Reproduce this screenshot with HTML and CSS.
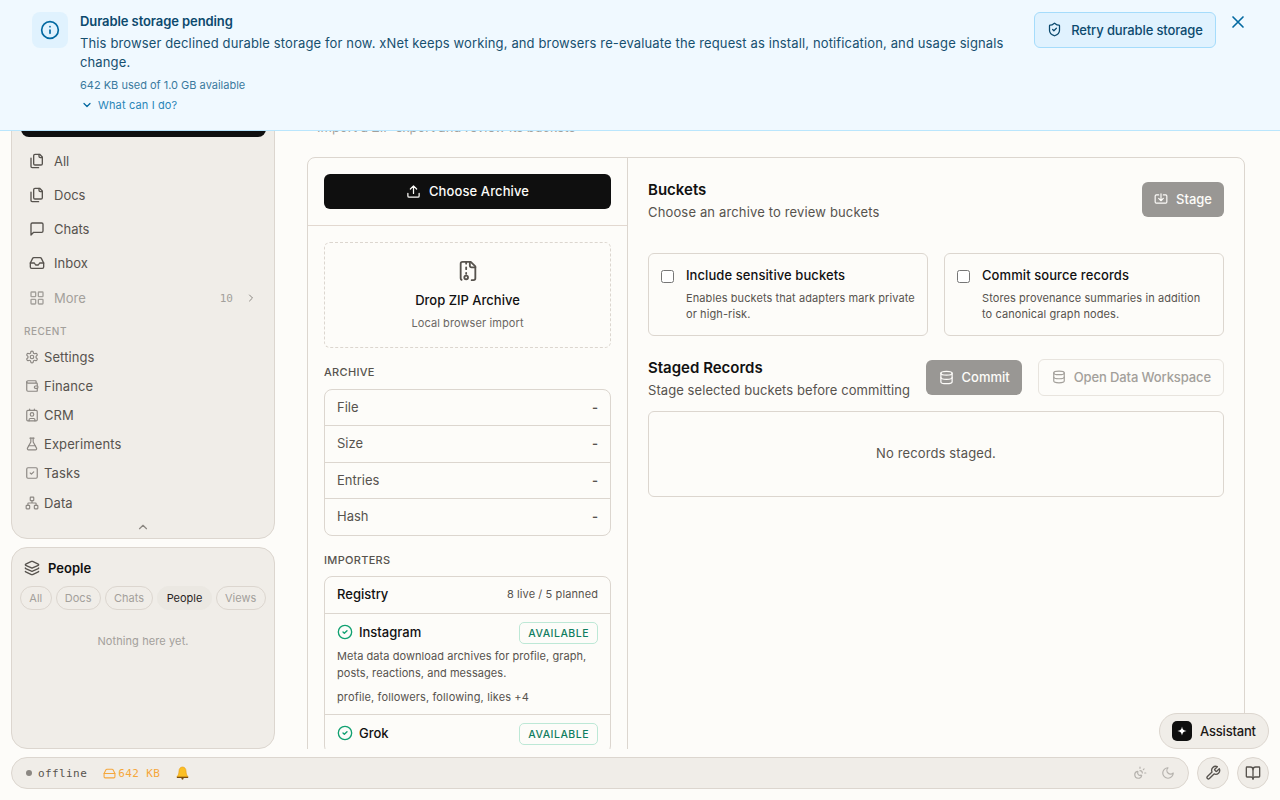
FILE: index.html
```html
<!DOCTYPE html>
<html lang="en">
<head>
    <meta charset="UTF-8">
    <meta name="viewport" content="width=device-width, initial-scale=1.0">
    <title>Import</title>
    <link rel="stylesheet" href="styles.css">
</head>
<body>
    <div class="banner">
        <div class="banner-icon">
            <svg width="20" height="20" viewBox="0 0 24 24" class="ico"><circle cx="12" cy="12" r="10"/><path d="M12 16v-4M12 8h.01"/></svg>
        </div>
        <div class="banner-body">
            <div class="banner-title">Durable storage pending</div>
            <p class="banner-text">This browser declined durable storage for now. xNet keeps working, and browsers re-evaluate the request as install, notification, and usage signals change.</p>
            <div class="banner-usage">642 KB used of 1.0 GB available</div>
            <div class="banner-more">
                <svg width="12" height="12" viewBox="0 0 24 24" class="ico"><path d="m6 9 6 6 6-6"/></svg>
                What can I do?
            </div>
        </div>
        <button class="retry">
            <svg width="15" height="15" viewBox="0 0 24 24" class="ico"><path d="M20 13c0 5-3.5 7.5-7.66 8.95a1 1 0 0 1-.67-.01C7.5 20.5 4 18 4 13V6a1 1 0 0 1 1-1c2 0 4.5-1.2 6.24-2.72a1.17 1.17 0 0 1 1.52 0C14.51 3.81 17 5 19 5a1 1 0 0 1 1 1z"/><path d="m9 12 2 2 4-4"/></svg>
            Retry durable storage
        </button>
        <svg class="ico banner-close" width="20" height="20" viewBox="0 0 24 24"><path d="M18 6 6 18M6 6l12 12"/></svg>
    </div>

    <div class="shell">
        <div class="top">
            <aside class="sidebar">
                <div class="panel nav-panel">
                    <div class="nav-new"></div>
                    <div class="nav-list">
                        <div class="nav-item"><svg width="16" height="16" viewBox="0 0 24 24" class="ico"><path d="M20 7h-3a2 2 0 0 1-2-2V2"/><path d="M9 18a2 2 0 0 1-2-2V4a2 2 0 0 1 2-2h7l4 4v10a2 2 0 0 1-2 2Z"/><path d="M3 7.6v12.8A1.6 1.6 0 0 0 4.6 22h9.8"/></svg>All</div>
                        <div class="nav-item"><svg width="16" height="16" viewBox="0 0 24 24" class="ico"><path d="M20 7h-3a2 2 0 0 1-2-2V2"/><path d="M9 18a2 2 0 0 1-2-2V4a2 2 0 0 1 2-2h7l4 4v10a2 2 0 0 1-2 2Z"/><path d="M3 7.6v12.8A1.6 1.6 0 0 0 4.6 22h9.8"/></svg>Docs</div>
                        <div class="nav-item"><svg width="16" height="16" viewBox="0 0 24 24" class="ico"><path d="M21 15a2 2 0 0 1-2 2H7l-4 4V5a2 2 0 0 1 2-2h14a2 2 0 0 1 2 2z"/></svg>Chats</div>
                        <div class="nav-item"><svg width="16" height="16" viewBox="0 0 24 24" class="ico"><path d="M22 12h-6l-2 3h-4l-2-3H2"/><path d="M5.45 5.11 2 12v6a2 2 0 0 0 2 2h16a2 2 0 0 0 2-2v-6l-3.45-6.89A2 2 0 0 0 16.76 4H7.24a2 2 0 0 0-1.79 1.11z"/></svg>Inbox</div>
                        <div class="nav-item nav-more">
                            <svg width="16" height="16" viewBox="0 0 24 24" class="ico"><rect x="3" y="3" width="7" height="7" rx="1"/><rect x="14" y="3" width="7" height="7" rx="1"/><rect x="14" y="14" width="7" height="7" rx="1"/><rect x="3" y="14" width="7" height="7" rx="1"/></svg>
                            More
                            <span class="nav-count">10</span>
                            <svg class="ico nav-chevron" width="12" height="12" viewBox="0 0 24 24"><path d="m9 18 6-6-6-6"/></svg>
                        </div>
                    </div>
                    <div class="nav-label">RECENT</div>
                    <div class="recent-item"><svg width="14" height="14" viewBox="0 0 24 24" class="ico"><path d="M12.22 2h-.44a2 2 0 0 0-2 2v.18a2 2 0 0 1-1 1.73l-.43.25a2 2 0 0 1-2 0l-.15-.08a2 2 0 0 0-2.73.73l-.22.38a2 2 0 0 0 .73 2.73l.15.1a2 2 0 0 1 1 1.72v.51a2 2 0 0 1-1 1.74l-.15.09a2 2 0 0 0-.73 2.73l.22.38a2 2 0 0 0 2.73.73l.15-.08a2 2 0 0 1 2 0l.43.25a2 2 0 0 1 1 1.73V20a2 2 0 0 0 2 2h.44a2 2 0 0 0 2-2v-.18a2 2 0 0 1 1-1.73l.43-.25a2 2 0 0 1 2 0l.15.08a2 2 0 0 0 2.73-.73l.22-.39a2 2 0 0 0-.73-2.73l-.15-.08a2 2 0 0 1-1-1.74v-.5a2 2 0 0 1 1-1.74l.15-.09a2 2 0 0 0 .73-2.73l-.22-.38a2 2 0 0 0-2.73-.73l-.15.08a2 2 0 0 1-2 0l-.43-.25a2 2 0 0 1-1-1.73V4a2 2 0 0 0-2-2z"/><circle cx="12" cy="12" r="3"/></svg>Settings</div>
                    <div class="recent-item"><svg width="14" height="14" viewBox="0 0 24 24" class="ico"><path d="M19 7V4a1 1 0 0 0-1-1H5a2 2 0 0 0 0 4h15a1 1 0 0 1 1 1v4h-3a2 2 0 0 0 0 4h3a1 1 0 0 0 1-1v-2a1 1 0 0 0-1-1"/><path d="M3 5v14a2 2 0 0 0 2 2h15a1 1 0 0 0 1-1v-4"/></svg>Finance</div>
                    <div class="recent-item"><svg width="14" height="14" viewBox="0 0 24 24" class="ico"><path d="M16 2v2M8 2v2"/><path d="M7 22v-2a2 2 0 0 1 2-2h6a2 2 0 0 1 2 2v2"/><circle cx="12" cy="11" r="3"/><rect x="3" y="4" width="18" height="18" rx="2"/></svg>CRM</div>
                    <div class="recent-item"><svg width="14" height="14" viewBox="0 0 24 24" class="ico"><path d="M14 2v6a2 2 0 0 0 .245.96l5.51 10.08A2 2 0 0 1 18 22H6a2 2 0 0 1-1.755-2.96l5.51-10.08A2 2 0 0 0 10 8V2"/><path d="M6.453 15h11.094M8.5 2h7"/></svg>Experiments</div>
                    <div class="recent-item"><svg width="14" height="14" viewBox="0 0 24 24" class="ico"><rect x="3" y="3" width="18" height="18" rx="2"/><path d="m9 12 2 2 4-4"/></svg>Tasks</div>
                    <div class="recent-item"><svg width="14" height="14" viewBox="0 0 24 24" class="ico"><rect x="16" y="16" width="6" height="6" rx="1"/><rect x="2" y="16" width="6" height="6" rx="1"/><rect x="9" y="2" width="6" height="6" rx="1"/><path d="M5 16v-3a1 1 0 0 1 1-1h12a1 1 0 0 1 1 1v3M12 12V8"/></svg>Data</div>
                    <div class="nav-collapse"><svg width="14" height="14" viewBox="0 0 24 24" class="ico"><path d="m18 15-6-6-6 6"/></svg></div>
                </div>

                <div class="panel people-panel">
                    <div class="people-head">
                        <svg width="16" height="16" viewBox="0 0 24 24" class="ico"><path d="M12.83 2.18a2 2 0 0 0-1.66 0L2.6 6.08a1 1 0 0 0 0 1.83l8.58 3.91a2 2 0 0 0 1.66 0l8.58-3.9a1 1 0 0 0 0-1.83z"/><path d="M2 12a1 1 0 0 0 .58.91l8.6 3.91a2 2 0 0 0 1.65 0l8.58-3.9A1 1 0 0 0 22 12"/><path d="M2 17a1 1 0 0 0 .58.91l8.6 3.91a2 2 0 0 0 1.65 0l8.58-3.9A1 1 0 0 0 22 17"/></svg>
                        People
                    </div>
                    <div class="chips">
                        <span class="chip">All</span>
                        <span class="chip">Docs</span>
                        <span class="chip">Chats</span>
                        <span class="chip chip-active">People</span>
                        <span class="chip">Views</span>
                    </div>
                    <p class="people-empty">Nothing here yet.</p>
                </div>
            </aside>

            <main class="main">
                <p class="main-sub">Import a ZIP export and review its buckets</p>
                <div class="import-card">
                    <section class="left-pane">
                        <div class="choose-wrap">
                            <button class="btn-dark">
                                <svg width="15" height="15" viewBox="0 0 24 24" class="ico"><path d="M12 3v12M17 8l-5-5-5 5"/><path d="M21 15v4a2 2 0 0 1-2 2H5a2 2 0 0 1-2-2v-4"/></svg>
                                Choose Archive
                            </button>
                        </div>
                        <div class="left-body">
                            <div class="dropzone">
                                <svg width="22" height="22" viewBox="0 0 24 24" class="ico"><path d="M10 2v2M10 8v2M10 14v1"/><path d="M14 2v4a2 2 0 0 0 2 2h4"/><path d="M16 22h2a2 2 0 0 0 2-2V7l-5-5H6a2 2 0 0 0-2 2v16a2 2 0 0 0 1 1.7"/><circle cx="10" cy="19" r="2"/></svg>
                                <div class="drop-title">Drop ZIP Archive</div>
                                <div class="drop-sub">Local browser import</div>
                            </div>

                            <div class="section-label">ARCHIVE</div>
                            <div class="info-table">
                                <div class="info-row"><span>File</span><b>-</b></div>
                                <div class="info-row"><span>Size</span><b>-</b></div>
                                <div class="info-row"><span>Entries</span><b>-</b></div>
                                <div class="info-row"><span>Hash</span><b>-</b></div>
                            </div>

                            <div class="section-label importers-label">IMPORTERS</div>
                            <div class="registry">
                                <div class="registry-head"><span>Registry</span><small>8 live / 5 planned</small></div>
                                <div class="importer">
                                    <div class="importer-top">
                                        <svg width="16" height="16" viewBox="0 0 24 24" class="ico ok"><circle cx="12" cy="12" r="10"/><path d="m9 12 2 2 4-4"/></svg>
                                        <span class="importer-name">Instagram</span>
                                        <span class="badge">AVAILABLE</span>
                                    </div>
                                    <p class="importer-desc">Meta data download archives for profile, graph, posts, reactions, and messages.</p>
                                    <p class="importer-tags">profile, followers, following, likes +4</p>
                                </div>
                                <div class="importer">
                                    <div class="importer-top">
                                        <svg width="16" height="16" viewBox="0 0 24 24" class="ico ok"><circle cx="12" cy="12" r="10"/><path d="m9 12 2 2 4-4"/></svg>
                                        <span class="importer-name">Grok</span>
                                        <span class="badge">AVAILABLE</span>
                                    </div>
                                </div>
                            </div>
                        </div>
                    </section>

                    <section class="right-pane">
                        <div class="pane-head">
                            <div>
                                <h2 class="pane-title">Buckets</h2>
                                <p class="pane-sub">Choose an archive to review buckets</p>
                            </div>
                            <button class="btn-gray">
                                <svg width="14" height="14" viewBox="0 0 24 24" class="ico"><path d="M12 3v12M8 11l4 4 4-4"/><path d="M8 5H4a2 2 0 0 0-2 2v10a2 2 0 0 0 2 2h16a2 2 0 0 0 2-2V7a2 2 0 0 0-2-2h-4"/></svg>
                                Stage
                            </button>
                        </div>

                        <div class="options">
                            <label class="option">
                                <span class="check"></span>
                                <span>
                                    <span class="option-title">Include sensitive buckets</span>
                                    <span class="option-desc">Enables buckets that adapters mark private or high-risk.</span>
                                </span>
                            </label>
                            <label class="option">
                                <span class="check"></span>
                                <span>
                                    <span class="option-title">Commit source records</span>
                                    <span class="option-desc">Stores provenance summaries in addition to canonical graph nodes.</span>
                                </span>
                            </label>
                        </div>

                        <div class="staged-head">
                            <div class="staged-text">
                                <h2 class="pane-title">Staged Records</h2>
                                <p class="pane-sub">Stage selected buckets before committing</p>
                            </div>
                            <button class="btn-gray btn-commit">
                                <svg width="15" height="15" viewBox="0 0 24 24" class="ico"><ellipse cx="12" cy="5" rx="9" ry="3"/><path d="M3 5v14a9 3 0 0 0 18 0V5"/><path d="M3 12a9 3 0 0 0 18 0"/></svg>
                                Commit
                            </button>
                            <button class="btn-ghost">
                                <svg width="14" height="14" viewBox="0 0 24 24" class="ico"><ellipse cx="12" cy="5" rx="9" ry="3"/><path d="M3 5v14a9 3 0 0 0 18 0V5"/><path d="M3 12a9 3 0 0 0 18 0"/></svg>
                                Open Data Workspace
                            </button>
                        </div>

                        <div class="empty-box">No records staged.</div>
                    </section>
                </div>
            </main>
        </div>

        <div class="bottom">
            <div class="status-bar">
                <span class="status-dot"></span>
                <span class="status-text">offline</span>
                <span class="status-storage">
                    <svg width="13" height="13" viewBox="0 0 24 24" class="ico"><path d="M22 12H2"/><path d="M5.45 5.11 2 12v6a2 2 0 0 0 2 2h16a2 2 0 0 0 2-2v-6l-3.45-6.89A2 2 0 0 0 16.76 4H7.24a2 2 0 0 0-1.79 1.11z"/></svg>
                    642 KB
                </span>
                <svg class="status-bell" width="13" height="14" viewBox="0 0 13 14"><path d="M6.5 1C4.3 1 3 2.8 3 5c0 3-1 4.6-2.2 6h11.4C11 9.6 10 8 10 5c0-2.2-1.3-4-3.5-4z" fill="#fbbf24" stroke="#e79a10" stroke-width=".6"/><rect x=".8" y="10.8" width="11.4" height="1.2" rx=".6" fill="#7a4e10"/><circle cx="6.5" cy="12.6" r="1.1" fill="#7a4e10"/></svg>
                <span class="status-right">
                    <svg width="14" height="14" viewBox="0 0 24 24" class="ico"><path d="M12 2v2M14.84 16.39a6 6 0 1 1-7.22-7.23c.62-.14.97.66.71 1.25a4 4 0 0 0 5.26 5.26c.59-.26 1.4.09 1.25.72M16 12a4 4 0 0 0-4-4M19 5l-1.26 1.26M20 12h2"/></svg>
                    <svg width="14" height="14" viewBox="0 0 24 24" class="ico"><path d="M12 3a6 6 0 0 0 9 9 9 9 0 1 1-9-9Z"/></svg>
                </span>
            </div>
            <button class="round-btn"><svg width="16" height="16" viewBox="0 0 24 24" class="ico"><path d="M14.7 6.3a1 1 0 0 0 0 1.4l1.6 1.6a1 1 0 0 0 1.4 0l3.77-3.77a6 6 0 0 1-7.94 7.94l-6.91 6.91a2.12 2.12 0 0 1-3-3l6.91-6.91a6 6 0 0 1 7.94-7.94l-3.76 3.76z"/></svg></button>
            <button class="round-btn"><svg width="16" height="16" viewBox="0 0 24 24" class="ico"><path d="M12 7v14"/><path d="M3 18a1 1 0 0 1-1-1V4a1 1 0 0 1 1-1h5a4 4 0 0 1 4 4 4 4 0 0 1 4-4h5a1 1 0 0 1 1 1v13a1 1 0 0 1-1 1h-6a3 3 0 0 0-3 3 3 3 0 0 0-3-3z"/></svg></button>
        </div>
    </div>

    <button class="assistant">
        <span class="assistant-mark">
            <svg width="10" height="10" viewBox="0 0 24 24"><path d="M12 1c1 7 4 10 11 11-7 1-10 4-11 11-1-7-4-10-11-11 7-1 10-4 11-11z" fill="#fff"/></svg>
        </span>
        Assistant
    </button>
</body>
</html>
```

FILE: styles.css
```css
* {
    box-sizing: border-box;
}
body {
    margin: 0;
    height: 800px;
    overflow: hidden;
    font-family: Inter, "Noto Sans", sans-serif;
    font-size: 13px;
    color: #111;
    background-color: #fdfcf9;
}
p, h2 {
    margin: 0;
}
button {
    font-family: inherit;
}
.ico {
    fill: none;
    stroke: currentColor;
    stroke-width: 2;
    stroke-linecap: round;
    stroke-linejoin: round;
    flex-shrink: 0;
}

/* banner over the top of the page */
.banner {
    position: absolute;
    top: 0;
    left: 0;
    z-index: 5;
    width: 1280px;
    height: 131px;
    display: flex;
    padding: 12px 32px 0;
    background-color: #f0f9ff;
    border-bottom: 1px solid #bae6fd;
}
.banner-icon {
    width: 36px;
    height: 36px;
    margin-right: 12px;
    border-radius: 8px;
    background-color: #e0f2fe;
    color: #0369a1;
    display: flex;
    align-items: center;
    justify-content: center;
    flex-shrink: 0;
}
.banner-body {
    width: 954px;
    margin-top: -1px;
    flex-shrink: 0;
}
.banner-title {
    font-weight: 600;
    line-height: 20px;
    letter-spacing: -.09px;
    color: #0c4a6e;
}
.banner-text {
    margin-top: 3px;
    width: 930px;
    line-height: 19px;
    letter-spacing: .13px;
    color: #17506f;
}
.banner-usage {
    margin-top: 5px;
    font-size: 11px;
    line-height: 16px;
    color: #3a7a9e;
}
.banner-more {
    margin-top: 4px;
    display: flex;
    align-items: center;
    gap: 5px;
    font-size: 11px;
    line-height: 16px;
    letter-spacing: .14px;
    padding-left: 1px;
    color: #2a86b8;
}
.banner-more .ico {
    stroke-width: 2.5;
    color: #0369a1;
}
.retry {
    width: 182px;
    height: 36px;
    padding: 0 0 1px;
    border: 1px solid #a5dcfb;
    border-radius: 6px;
    background-color: #e0f2fe;
    color: #0c4a6e;
    font-size: 13px;
    font-weight: 500;
    letter-spacing: -.13px;
    display: flex;
    align-items: center;
    justify-content: center;
    gap: 9px;
    flex-shrink: 0;
}
.banner-close {
    margin: 0 0 0 12px;
    color: #0369a1;
}

.shell {
    height: 800px;
    display: flex;
    flex-direction: column;
    gap: 8px;
    padding: 0 11px 11px;
}
.top {
    flex: 1;
    min-height: 0;
    display: flex;
}

/* sidebar */
.sidebar {
    width: 264px;
    flex-shrink: 0;
    display: flex;
    flex-direction: column;
    gap: 8px;
}
.panel {
    background-color: #f0ede8;
    border: 1px solid #dcd6cf;
    border-radius: 16px;
}
.nav-panel {
    height: 528px;
    margin-top: 11px;
    padding: 88px 8px 0 9px;
}
.nav-new {
    height: 37px;
    border-radius: 8px;
    background-color: #0f0f0f;
}
.nav-list {
    margin-top: 7px;
}
.nav-item {
    height: 34px;
    display: flex;
    align-items: center;
    gap: 9px;
    padding: 0 9px 0 8px;
    color: #57534e;
}
.nav-item .ico {
    color: #57534e;
}
.nav-more {
    margin-top: 1px;
    color: #a3a09b;
}
.nav-more .ico {
    color: #a3a09b;
}
.nav-more .nav-chevron {
    color: #8b8782;
}
.nav-count {
    margin-left: auto;
    margin-right: 3px;
    font-family: "DejaVu Sans Mono", monospace;
    font-size: 11px;
}
.nav-label {
    margin-top: 8px;
    margin-bottom: 3px;
    padding-left: 3px;
    font-size: 10px;
    line-height: 16px;
    font-weight: 500;
    letter-spacing: .5px;
    color: #a3a09b;
}
.recent-item {
    height: 29.2px;
    display: flex;
    align-items: center;
    gap: 5px;
    padding-left: 4px;
    letter-spacing: .1px;
    color: #57534e;
}
.recent-item .ico {
    color: #8b8782;
}
.nav-collapse {
    display: flex;
    justify-content: center;
    margin-top: 3px;
    padding-right: 2px;
    color: #8b8782;
}
.people-panel {
    flex: 1;
    padding: 12px 8px 0;
}
.people-head {
    display: flex;
    align-items: center;
    gap: 8px;
    padding-left: 4px;
    font-weight: 600;
    line-height: 16px;
}
.people-head .ico {
    color: #57534e;
}
.chips {
    display: flex;
    gap: 4px;
    margin-top: 10px;
}
.chip {
    height: 24px;
    padding: 0 8.3px;
    border: 1px solid #dcd6cf;
    border-radius: 12px;
    font-size: 11px;
    line-height: 22px;
    color: #a3a09b;
}
.chip-active {
    background-color: #ebe8e2;
    border-color: #ebe8e2;
    color: #292524;
}
.people-empty {
    margin-top: 23px;
    text-align: center;
    font-size: 11px;
    line-height: 16px;
    letter-spacing: .1px;
    color: #a3a09b;
}

/* main */
.main {
    flex: 1;
    min-width: 0;
    overflow: hidden;
    padding: 118px 24px 0 32px;
}
.main-sub {
    height: 18px;
    line-height: 18px;
    margin-bottom: 21px;
    color: #a3a09b;
    padding-left: 10px;
}
.import-card {
    height: 800px;
    display: flex;
    border: 1px solid #dcd6cf;
    border-radius: 8px;
}
.left-pane {
    width: 320px;
    flex-shrink: 0;
    border-right: 1px solid #dcd6cf;
}
.choose-wrap {
    padding: 16px;
    border-bottom: 1px solid #e2d8d0;
}
.btn-dark {
    width: 100%;
    height: 35px;
    padding: 0 0 1px;
    border: none;
    border-radius: 6px;
    background-color: #0f0f0f;
    color: #fdfcf9;
    font-size: 13px;
    font-weight: 500;
    letter-spacing: .1px;
    display: flex;
    align-items: center;
    justify-content: center;
    gap: 8px;
}
.left-body {
    padding: 16px;
}
.dropzone {
    height: 106px;
    border: 1px dashed #dcd6cf;
    border-radius: 6px;
    display: flex;
    flex-direction: column;
    align-items: center;
    padding-top: 17px;
    color: #57534e;
}
.drop-title {
    margin-top: 9px;
    font-weight: 500;
    line-height: 18px;
    color: #111;
}
.drop-sub {
    margin-top: 6px;
    font-size: 11px;
    line-height: 16px;
    letter-spacing: .1px;
    color: #6b6763;
}
.section-label {
    margin-top: 16px;
    font-size: 11px;
    line-height: 16px;
    font-weight: 500;
    letter-spacing: .3px;
    color: #57534e;
}
.info-table {
    margin-top: 9px;
    border: 1px solid #dcd6cf;
    border-radius: 8px;
}
.info-row {
    height: 36.25px;
    display: flex;
    justify-content: space-between;
    align-items: center;
    padding: 0 12px 1px;
    color: #57534e;
    border-bottom: 1px solid #dcd6cf;
}
.info-row:last-child {
    border-bottom: none;
}
.info-row b {
    font-weight: 600;
}
.importers-label {
    margin-top: 16px;
}
.registry {
    margin-top: 8px;
    border: 1px solid #dcd6cf;
    border-radius: 8px;
}
.registry-head {
    height: 37px;
    display: flex;
    justify-content: space-between;
    align-items: center;
    padding: 0 12px 2px;
    border-bottom: 1px solid #dcd6cf;
    font-weight: 500;
}
.registry-head small {
    font-size: 11px;
    font-weight: 400;
    letter-spacing: .1px;
    color: #57534e;
}
.importer {
    padding: 7px 12px 8px;
    border-bottom: 1px solid #dcd6cf;
}
.importer-top {
    display: flex;
    align-items: center;
    height: 22px;
}
.ok {
    color: #10a070;
}
.importer-name {
    margin-left: 6px;
    font-weight: 500;
}
.badge {
    margin-left: auto;
    margin-top: 2px;
    height: 22px;
    padding: 0 8px;
    border: 1px solid #bde8d6;
    border-radius: 5px;
    font-size: 10.5px;
    line-height: 21px;
    font-weight: 500;
    letter-spacing: .5px;
    color: #0f7d5f;
}
.importer-desc {
    margin-top: 5px;
    font-size: 11px;
    line-height: 17px;
    letter-spacing: .06px;
    color: #57534e;
}
.importer-tags {
    margin-top: 7px;
    font-size: 11px;
    line-height: 17px;
    letter-spacing: .13px;
    color: #57534e;
}

.right-pane {
    flex: 1;
    min-width: 0;
    padding: 24px 20px 0;
}
.pane-head {
    display: flex;
    justify-content: space-between;
    align-items: flex-start;
    height: 71px;
}
.pane-title {
    font-size: 15px;
    font-weight: 600;
    line-height: 16px;
}
.pane-sub {
    margin-top: 5px;
    line-height: 18px;
    letter-spacing: .15px;
    color: #57534e;
}
.btn-gray {
    height: 35px;
    padding: 0 12px 1px;
    border: none;
    border-radius: 6px;
    background-color: #999794;
    color: #fdfcf9;
    font-size: 13px;
    font-weight: 500;
    white-space: nowrap;
    display: flex;
    align-items: center;
    gap: 8px;
    flex-shrink: 0;
}
.btn-commit {
    padding: 0 12.5px 1px;
}
.options {
    display: grid;
    grid-template-columns: 1fr 1fr;
    gap: 16px;
}
.option {
    height: 83px;
    display: flex;
    gap: 12px;
    padding: 12px;
    border: 1px solid #dcd6cf;
    border-radius: 6px;
}
.check {
    width: 13px;
    height: 13px;
    margin-top: 4px;
    border: 1px solid #767676;
    border-radius: 2.5px;
    background-color: #fff;
    flex-shrink: 0;
}
.option-title {
    display: block;
    font-weight: 500;
    line-height: 18px;
    letter-spacing: .08px;
}
.option-desc {
    display: block;
    margin-top: 6px;
    font-size: 11px;
    line-height: 16px;
    letter-spacing: .09px;
    color: #57534e;
}
.staged-head {
    display: flex;
    align-items: center;
    gap: 16px;
    height: 37px;
    margin-top: 23px;
}
.staged-text {
    margin-right: auto;
    padding-top: 4px;
    white-space: nowrap;
}
.staged-text .pane-sub {
    letter-spacing: .075px;
}
.btn-ghost {
    height: 37px;
    padding: 0 12.5px 1px;
    border: 1px solid #e8e4de;
    border-radius: 6px;
    background: none;
    color: #a3a09b;
    font-size: 13px;
    font-weight: 500;
    letter-spacing: -.12px;
    white-space: nowrap;
    display: flex;
    align-items: center;
    gap: 8px;
    flex-shrink: 0;
}
.empty-box {
    height: 86px;
    margin-top: 15px;
    padding-bottom: 2px;
    border: 1px solid #dcd6cf;
    border-radius: 6px;
    display: flex;
    align-items: center;
    justify-content: center;
    letter-spacing: .12px;
    color: #57534e;
}

/* bottom bar */
.bottom {
    height: 32px;
    display: flex;
    gap: 8px;
    flex-shrink: 0;
}
.status-bar {
    flex: 1;
    display: flex;
    align-items: center;
    padding: 0 13px 0 14px;
    border: 1px solid #dcd6cf;
    border-radius: 16px;
    background-color: #f0ede8;
    font-family: "DejaVu Sans Mono", monospace;
    font-size: 11px;
    letter-spacing: .4px;
}
.status-dot {
    width: 6px;
    height: 6px;
    border-radius: 50%;
    background-color: #8b8782;
}
.status-text {
    margin-left: 6px;
    color: #57534e;
}
.status-storage {
    margin-left: 16px;
    display: flex;
    align-items: center;
    gap: 2px;
    color: #f5a73b;
}
.status-bell {
    margin-left: 16px;
}
.status-right {
    margin-left: auto;
    display: flex;
    gap: 14px;
    color: #b5b2ad;
}
.round-btn {
    width: 32px;
    height: 32px;
    padding: 0;
    border: 1px solid #dcd6cf;
    border-radius: 50%;
    background-color: #f0ede8;
    color: #57534e;
    display: flex;
    align-items: center;
    justify-content: center;
}
.assistant {
    position: absolute;
    right: 11px;
    top: 713px;
    width: 110px;
    height: 36px;
    padding: 0 0 1px 12px;
    border: 1px solid #dcd6cf;
    border-radius: 18px;
    background-color: #f0ede8;
    color: #1c1917;
    font-size: 13px;
    font-weight: 500;
    letter-spacing: -.2px;
    display: flex;
    align-items: center;
    gap: 8px;
}
.assistant-mark {
    width: 20px;
    height: 20px;
    border-radius: 5px;
    background-color: #0f0f0f;
    display: flex;
    align-items: center;
    justify-content: center;
}
```
